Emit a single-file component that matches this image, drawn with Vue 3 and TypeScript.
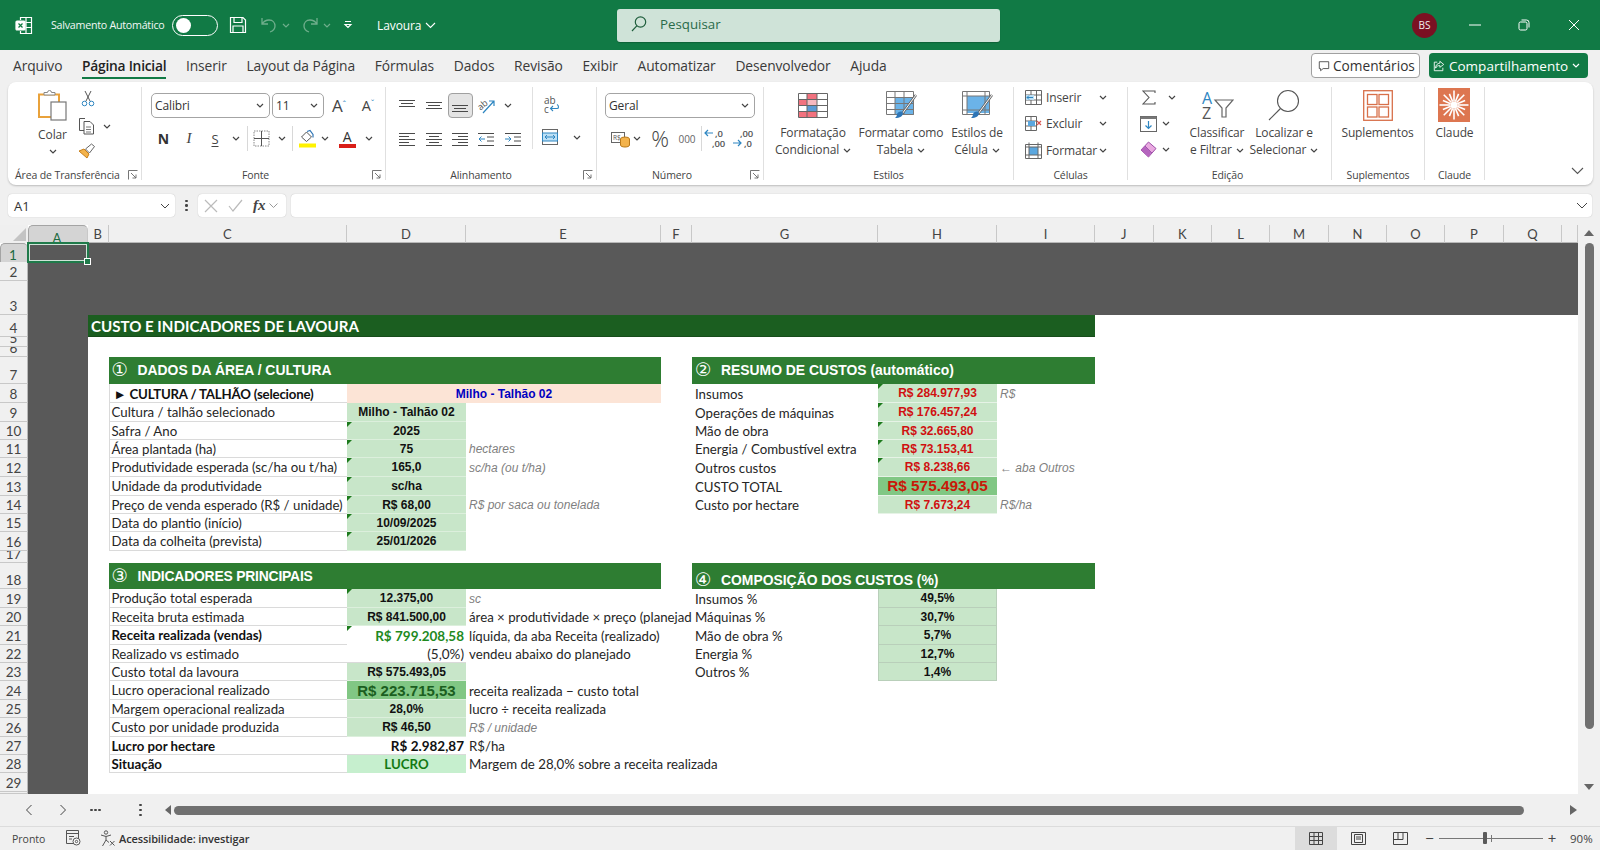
<script setup lang="ts">
type Cell = { r: number; c: number; s?: number; t: string; k: string }

const cols: [string, number][] = [
  ['A', 60], ['B', 20.5], ['C', 238.5], ['D', 119], ['E', 195], ['F', 31], ['G', 186], ['H', 119], ['I', 98],
  ['J', 58.5], ['K', 58.5], ['L', 58], ['M', 59], ['N', 58], ['O', 58], ['P', 59], ['Q', 58], ['', 16],
]
const rows = [19, 19, 34, 22, 10, 10, 27, 19, 19, 18, 18, 19, 19, 18, 18, 19, 12, 26, 19, 18, 19, 18, 18, 19, 18, 19, 18, 18, 19, 2]
const gridCols = '28px ' + cols.map((c) => c[1] + 'px').join(' ')
const gridRows = '18px ' + rows.map((h) => h + 'px').join(' ')

const C = 4, D = 5, E = 6, G = 8, H = 9, I = 10

const cells: Cell[] = [
  { r: 4, c: 3, s: 8, t: 'CUSTO E INDICADORES DE LAVOURA', k: 'title' },
  { r: 8, c: C, t: '► CULTURA / TALHÃO (selecione)', k: 'lb strong pickl' },
  { r: 8, c: D, s: 2, t: 'Milho - Talhão 02', k: 'pick' },
]

const left: [number, string, string, string, string?][] = [
  [9, 'Cultura / talhão selecionado', 'Milho - Talhão 02', ''],
  [10, 'Safra / Ano', '2025', 'tick'],
  [11, 'Área plantada (ha)', '75', 'tick', 'hectares'],
  [12, 'Produtividade esperada (sc/ha ou t/ha)', '165,0', 'tick', 'sc/ha (ou t/ha)'],
  [13, 'Unidade da produtividade', 'sc/ha', 'tick'],
  [14, 'Preço de venda esperado (R$ / unidade)', 'R$ 68,00', 'tick', 'R$ por saca ou tonelada'],
  [15, 'Data do plantio (início)', '10/09/2025', 'tick'],
  [16, 'Data da colheita (prevista)', '25/01/2026', 'tick'],
]
for (const [r, l, v, k, n] of left) {
  cells.push({ r, c: C, t: l, k: 'lb' }, { r, c: D, t: v, k: 'val ' + k })
  if (n) cells.push({ r, c: E, t: n, k: 'note' })
}

const costs: [number, string, string, string, string?][] = [
  [8, 'Insumos', 'R$ 284.977,93', 'tick', 'R$'],
  [9, 'Operações de máquinas', 'R$ 176.457,24', 'tick'],
  [10, 'Mão de obra', 'R$ 32.665,80', 'tick'],
  [11, 'Energia / Combustível extra', 'R$ 73.153,41', 'tick'],
  [12, 'Outros custos', 'R$ 8.238,66', 'tick', '← aba Outros'],
  [13, 'CUSTO TOTAL', 'R$ 575.493,05', 'total'],
  [14, 'Custo por hectare', 'R$ 7.673,24', '', 'R$/ha'],
]
for (const [r, l, v, k, n] of costs) {
  cells.push({ r, c: G, t: l, k: 'lb bare' }, { r, c: H, t: v, k: 'val red wsep ' + k })
  if (n) cells.push({ r, c: I, t: n, k: 'note' })
}

cells.push(
  { r: 19, c: C, t: 'Produção total esperada', k: 'lb' },
  { r: 19, c: D, t: '12.375,00', k: 'val tick' },
  { r: 19, c: E, t: 'sc', k: 'note' },
  { r: 20, c: C, t: 'Receita bruta estimada', k: 'lb' },
  { r: 20, c: D, t: 'R$ 841.500,00', k: 'val' },
  { r: 20, c: E, s: 2, t: 'área × produtividade × preço (planejado)', k: 'txt' },
  { r: 21, c: C, t: 'Receita realizada (vendas)', k: 'lb strong' },
  { r: 21, c: D, t: 'R$ 799.208,58', k: 'right green tick' },
  { r: 21, c: E, s: 2, t: 'líquida, da aba Receita (realizado)', k: 'txt' },
  { r: 22, c: C, t: 'Realizado vs estimado', k: 'lb' },
  { r: 22, c: D, t: '(5,0%)', k: 'right plain' },
  { r: 22, c: E, t: 'vendeu abaixo do planejado', k: 'txt' },
  { r: 23, c: C, t: 'Custo total da lavoura', k: 'lb' },
  { r: 23, c: D, t: 'R$ 575.493,05', k: 'val' },
  { r: 24, c: C, t: 'Lucro operacional realizado', k: 'lb' },
  { r: 24, c: D, t: 'R$ 223.715,53', k: 'val profit' },
  { r: 24, c: E, t: 'receita realizada − custo total', k: 'txt' },
  { r: 25, c: C, t: 'Margem operacional realizada', k: 'lb' },
  { r: 25, c: D, t: '28,0%', k: 'val' },
  { r: 25, c: E, t: 'lucro ÷ receita realizada', k: 'txt' },
  { r: 26, c: C, t: 'Custo por unidade produzida', k: 'lb' },
  { r: 26, c: D, t: 'R$ 46,50', k: 'val' },
  { r: 26, c: E, t: 'R$ / unidade', k: 'note' },
  { r: 27, c: C, t: 'Lucro por hectare', k: 'lb strong' },
  { r: 27, c: D, t: 'R$ 2.982,87', k: 'right boldc edge' },
  { r: 27, c: E, t: 'R$/ha', k: 'txt' },
  { r: 28, c: C, t: 'Situação', k: 'lb strong' },
  { r: 28, c: D, t: 'LUCRO', k: 'state' },
  { r: 28, c: E, s: 3, t: 'Margem de 28,0% sobre a receita realizada', k: 'txt' },
)

const pct: [number, string, string][] = [
  [19, 'Insumos %', '49,5%'], [20, 'Máquinas %', '30,7%'], [21, 'Mão de obra %', '5,7%'], [22, 'Energia %', '12,7%'], [23, 'Outros %', '1,4%'],
]
for (const [r, l, v] of pct) cells.push({ r, c: G, t: l, k: 'lb bare' }, { r, c: H, t: v, k: 'val gb' })

const heads = [
  { r: 7, c: C, s: 3, n: '①', t: 'DADOS DA ÁREA / CULTURA', k: 'up' },
  { r: 7, c: G, s: 3, n: '②', t: 'RESUMO DE CUSTOS (automático)', k: 'up' },
  { r: 18, c: C, s: 3, n: '③', t: 'INDICADORES PRINCIPAIS', k: 'tight' },
  { r: 18, c: G, s: 3, n: '④', t: 'COMPOSIÇÃO DOS CUSTOS (%)', k: 'low' },
]

const place = (c: { r: number; c: number; s?: number }) => ({
  gridRow: String(c.r + 1),
  gridColumn: c.s ? `${c.c} / span ${c.s}` : String(c.c),
})

const tabs = ['Arquivo', 'Página Inicial', 'Inserir', 'Layout da Página', 'Fórmulas', 'Dados', 'Revisão', 'Exibir', 'Automatizar', 'Desenvolvedor', 'Ajuda']

const spokes = Array.from({ length: 16 }, (_, i) => {
  const a = (i / 16) * Math.PI * 2
  const l = i % 2 ? 12 : 14.5
  return { x1: 16 + Math.cos(a) * 3.5, y1: 17 + Math.sin(a) * 3.5, x2: 16 + Math.cos(a) * l, y2: 17 + Math.sin(a) * l }
})
</script>

<template>
  <div class="app">
    <header class="titlebar">
      <div class="tb-left">
        <svg class="xl" width="18" height="19" viewBox="0 0 18 19" fill="none" stroke="#fff" stroke-width="1.2">
          <path d="M5.5 4V1.5h11v16h-11V15M11 1.5v16M11 6.5h5.5M11 11.5h5.5" />
          <rect x="1" y="5" width="9" height="9" rx="1" fill="#fff" />
          <path d="M3.5 7.5l4 4M7.5 7.5l-4 4" stroke="#107C41" />
        </svg>
        <span class="auto">Salvamento Automático</span>
        <span class="toggle"><i></i></span>
        <svg class="save" width="18" height="18" viewBox="0 0 18 18" fill="none" stroke="#fff" stroke-width="1.2">
          <path d="M1.5 1.5h12.5l2.5 2.5v12.5h-15zM5 1.5v5h8v-5M4 16.5v-6.500h10v6.500" />
        </svg>
        <svg class="undo" width="18" height="18" viewBox="0 0 18 18" fill="none" stroke="#6fae8c" stroke-width="1.300">
          <path d="M2 2v6h6M2 8c2-3 4-4 7-4 4 0 6 3 6 6 0 3-2 5-5 6" />
        </svg>
        <svg class="chv dim mini" viewBox="0 0 8 5"><path d="M1 1l3 3 3-3" /></svg>
        <svg class="redo" width="18" height="18" viewBox="0 0 18 18" fill="none" stroke="#6fae8c" stroke-width="1.300">
          <path d="M16 2v6h-6M16 8c-2-3-4-4-7-4-4 0-6 3-6 6 0 3 2 5 5 6" />
        </svg>
        <svg class="chv dim mini" viewBox="0 0 8 5"><path d="M1 1l3 3 3-3" /></svg>
        <svg class="cust" width="10" height="10" viewBox="0 0 10 10" fill="none" stroke="#fff" stroke-width="1.100">
          <path d="M2 1.500h6M2 4.500l3 3 3-3z" />
        </svg>
        <span class="docname">Lavoura</span>
        <svg class="dnchv" width="11" height="7" viewBox="0 0 11 7" fill="none" stroke="#fff" stroke-width="1.100"><path d="M1 1l4.500 4.500L10 1" /></svg>
      </div>
      <div class="search">
        <svg width="18" height="18" viewBox="0 0 18 18" fill="none" stroke="#1f5e3c" stroke-width="1.200">
          <circle cx="10.500" cy="7" r="5.200" /><path d="M6.800 10.800L2 16" />
        </svg>
        <span>Pesquisar</span>
      </div>
      <div class="tb-right">
        <span class="avatar">BS</span>
        <svg class="w-min" width="12" height="2" viewBox="0 0 12 2"><path d="M0 1h12" stroke="#fff" /></svg>
        <svg class="w-max" width="12" height="12" viewBox="0 0 12 12" fill="none" stroke="#fff"><rect x="1" y="3" width="8" height="8" rx="1.500" /><path d="M3.500 1h5A2.500 2.500 0 0 1 11 3.500v5" /></svg>
        <svg class="w-close" width="12" height="12" viewBox="0 0 12 12" fill="none" stroke="#fff"><path d="M1 1l10 10M11 1L1 11" /></svg>
      </div>
    </header>

    <nav class="tabs">
      <span v-for="t in tabs" :key="t" class="tab" :class="{ on: t === 'Página Inicial' }">{{ t }}</span>
      <div class="tabs-right">
        <button class="cmt">
          <svg width="12" height="12" viewBox="0 0 14 14" fill="none" stroke="#444"><path d="M1.500 2h11v8H6l-3 2.500V10H1.500z" /></svg>
          Comentários
        </button>
        <button class="shr">
          <svg width="12" height="12" viewBox="0 0 14 14" fill="none" stroke="#fff"><path d="M8 1.500l4.500 3.700L8 8.500V6.500C5.500 6.500 4 7.500 3 9.500c0-3.500 2-5.500 5-5.800zM5 2.500H1.500v10h10V9" /></svg>
          Compartilhamento
          <svg class="chv white" viewBox="0 0 8 5"><path d="M1 1l3 3 3-3" /></svg>
        </button>
      </div>
    </nav>

    <section class="ribbon">
      <!-- Área de Transferência -->
      <div class="g g-clip">
        <div class="g-body clip-body">
          <div class="paste">
            <svg width="32" height="32" viewBox="0 0 32 32" fill="none">
              <path d="M2 5.500h20V28H2z" stroke="#E9A23B" stroke-width="2" />
              <path d="M7 6V3.500h3.500a2 2 0 0 1 4 0H18V6z" fill="#fff" stroke="#888" />
              <rect x="14" y="13" width="15" height="18" fill="#fff" stroke="#777" stroke-width="1.200" />
            </svg>
            <span>Colar</span>
            <svg class="chv" viewBox="0 0 8 5"><path d="M1 1l3 3 3-3" /></svg>
          </div>
          <div class="clip-side">
            <svg width="14" height="17" viewBox="0 0 14 17" fill="none" stroke="#555">
              <path d="M4 1l5 10M10 1L5 11" />
              <circle cx="3.500" cy="13.500" r="2.300" stroke="#2E86C1" /><circle cx="10.500" cy="13.500" r="2.300" stroke="#2E86C1" />
            </svg>
            <div class="cp">
              <svg width="18" height="18" viewBox="0 0 18 18" fill="none" stroke="#555">
                <path d="M6 13.500H1.500V1.500H7" /><path d="M6 4.500h6l3.500 3.500v9H6z" /><path d="M8 10h5M8 12.500h5M8 15h5" stroke-width=".8" />
              </svg>
              <svg class="chv" viewBox="0 0 8 5"><path d="M1 1l3 3 3-3" /></svg>
            </div>
            <svg width="18" height="16" viewBox="0 0 18 16" fill="none">
              <path d="M1 8l5-2 5 5-2 4z" fill="#F3B34C" stroke="#C77F1A" /><path d="M7.500 6l6-5 3 2.500-5 6.500z" stroke="#666" />
            </svg>
          </div>
        </div>
        <div class="g-foot clip-foot"><span>Área de Transferência</span><svg class="launch" viewBox="0 0 10 10"><path d="M.5 9.500v-9h9M3 3l5 5M8 4.500V8H4.500" /></svg></div>
      </div>

      <!-- Fonte -->
      <div class="g g-font">
        <div class="g-body col-body">
          <div class="font-r1">
            <div class="sel"><span>Calibri</span><svg class="chv" viewBox="0 0 8 5"><path d="M1 1l3 3 3-3" /></svg></div>
            <div class="sel"><span>11</span><svg class="chv" viewBox="0 0 8 5"><path d="M1 1l3 3 3-3" /></svg></div>
            <span class="abig">A<sup>ˆ</sup></span>
            <span class="asmall">A<sup>ˇ</sup></span>
          </div>
          <div class="font-r2">
            <b class="fn">N</b>
            <i class="fi">I</i>
            <u class="fs">S</u>
            <svg class="chv" viewBox="0 0 8 5"><path d="M1 1l3 3 3-3" /></svg>
            <span class="vs"></span>
            <svg width="17" height="17" viewBox="0 0 17 17" fill="none" stroke="#888" stroke-dasharray="1.500 1"><rect x="1" y="1" width="15" height="15" /><path d="M8.500 1v15M1 8.500h15" stroke="#555" stroke-dasharray="none" /></svg>
            <svg class="chv" viewBox="0 0 8 5"><path d="M1 1l3 3 3-3" /></svg>
            <span class="vs"></span>
            <svg width="18" height="19" viewBox="0 0 18 19" fill="none">
              <path d="M2.500 8l5-5 5 5-5 4.500z" stroke="#555" /><path d="M8 2.500l3-1 3 4v3" stroke="#2E75B6" stroke-width="1.200" />
              <rect x="0" y="14.500" width="17" height="4" fill="#FFF200" />
            </svg>
            <svg class="chv" viewBox="0 0 8 5"><path d="M1 1l3 3 3-3" /></svg>
            <span class="colorA">A</span>
            <svg class="chv" viewBox="0 0 8 5"><path d="M1 1l3 3 3-3" /></svg>
          </div>
        </div>
        <div class="g-foot font-foot"><span>Fonte</span><svg class="launch" viewBox="0 0 10 10"><path d="M.5 9.500v-9h9M3 3l5 5M8 4.500V8H4.500" /></svg></div>
      </div>

      <!-- Alinhamento -->
      <div class="g g-align">
        <div class="g-body align-body">
          <div class="align-l">
            <div class="al-r1">
              <svg class="lines" viewBox="0 0 16 12"><path d="M0 .5h16M2 3.500h12M0 6.500h16" /></svg>
              <svg class="lines" viewBox="0 0 16 12"><path d="M0 2.500h16M2 5.500h12M0 8.500h16" /></svg>
              <span class="al-on"><svg class="lines" viewBox="0 0 16 12"><path d="M0 5.500h16M2 8.500h12M0 11.500h16" /></svg></span>
              <svg width="20" height="20" viewBox="0 0 20 20" fill="none"><text x="1" y="12" class="orient" transform="rotate(-40 6 10)">ab</text><path d="M6 17L17 5M12 5h5v5" stroke="#2E86C1" stroke-width="1.200" /></svg>
              <svg class="chv" viewBox="0 0 8 5"><path d="M1 1l3 3 3-3" /></svg>
            </div>
            <div class="al-r2">
              <svg class="lines" viewBox="0 0 16 14"><path d="M0 1.500h16M0 4.500h10M0 7.500h16M0 10.500h10M0 13.500h16" /></svg>
              <svg class="lines" viewBox="0 0 16 14"><path d="M0 1.500h16M3 4.500h10M0 7.500h16M3 10.500h10M0 13.500h16" /></svg>
              <svg class="lines" viewBox="0 0 16 14"><path d="M0 1.500h16M6 4.500h10M0 7.500h16M6 10.500h10M0 13.500h16" /></svg>
              <svg class="lines" viewBox="0 0 16 14"><path d="M0 1.500h16M9 5h7M9 9h7M0 13.500h16" /><path d="M7 7H1M3.500 4.500L1 7l2.500 2.500" stroke="#2E86C1" /></svg>
              <svg class="lines" viewBox="0 0 16 14"><path d="M0 1.500h16M9 5h7M9 9h7M0 13.500h16" /><path d="M0 7h6M3.500 4.500L6 7 3.500 9.500" stroke="#2E86C1" /></svg>
            </div>
          </div>
          <div class="align-r">
            <svg width="20" height="20" viewBox="0 0 20 20" fill="none"><text x="3" y="9" class="abc">ab</text><text x="3" y="18" class="abc">c</text><path d="M16 13.500h-6M12 11l-2.500 2.500L12 16M16 13.500c2 0 2-3 0-4" stroke="#2E86C1" stroke-width="1.100" /></svg>
            <div class="merge">
              <svg width="18" height="18" viewBox="0 0 18 18" fill="none" stroke="#666"><rect x="1.500" y="1.500" width="15" height="15" /><rect x="1.500" y="5" width="15" height="8" fill="#BDE0F5" stroke="#2E86C1" /><path d="M4 9h10M6 7L4 9l2 2M12 7l2 2-2 2" stroke="#2E86C1" /></svg>
              <svg class="chv" viewBox="0 0 8 5"><path d="M1 1l3 3 3-3" /></svg>
            </div>
          </div>
        </div>
        <div class="g-foot align-foot"><span>Alinhamento</span><svg class="launch" viewBox="0 0 10 10"><path d="M.5 9.500v-9h9M3 3l5 5M8 4.500V8H4.500" /></svg></div>
      </div>

      <!-- Número -->
      <div class="g g-num">
        <div class="g-body col-body num-body">
          <div class="sel geral"><span>Geral</span><svg class="chv" viewBox="0 0 8 5"><path d="M1 1l3 3 3-3" /></svg></div>
          <div class="num-r2">
            <svg width="20" height="18" viewBox="0 0 20 18" fill="none"><rect x=".5" y="2.500" width="13" height="10" stroke="#666" /><text x="2" y="10" class="t7">R$</text><ellipse cx="14" cy="9" rx="4.500" ry="2" fill="#F3B34C" stroke="#B9791A" /><path d="M9.500 9v6c0 2.700 9 2.700 9 0V9" fill="#F3B34C" stroke="#B9791A" /></svg>
            <svg class="chv" viewBox="0 0 8 5"><path d="M1 1l3 3 3-3" /></svg>
            <span></span>
            <span class="pc">%</span>
            <span></span>
            <span class="mil">000</span>
            <span class="vs"></span>
            <span></span>
            <svg width="23" height="21" viewBox="0 0 23 21" fill="none"><text x="11" y="9" class="t9">,0</text><text x="8" y="19" class="t9">,00</text><path d="M9 5H1M4 2L1 5l3 3" stroke="#2E86C1" stroke-width="1.200" /></svg>
            <span></span>
            <svg width="23" height="21" viewBox="0 0 23 21" fill="none"><text x="8" y="9" class="t9">,00</text><text x="12" y="19" class="t9">,0</text><path d="M1 15h8M6 12l3 3-3 3" stroke="#2E86C1" stroke-width="1.200" /></svg>
          </div>
        </div>
        <div class="g-foot num-foot"><span>Número</span><svg class="launch" viewBox="0 0 10 10"><path d="M.5 9.500v-9h9M3 3l5 5M8 4.500V8H4.500" /></svg></div>
      </div>

      <!-- Estilos -->
      <div class="g g-sty">
        <div class="g-body sty-body">
          <div class="big w90">
            <div class="ico">
              <svg width="30" height="25" viewBox="0 0 30 25" fill="none">
                <rect x="9" y="1" width="10" height="5.500" fill="#F2727F" /><rect x="1" y="6.500" width="8" height="6" fill="#F2727F" /><rect x="9" y="12.500" width="10" height="6" fill="#5B9BD5" /><rect x="1" y="18.500" width="18" height="5.500" fill="#F2727F" /><rect x="9" y="6.500" width="10" height="6" fill="#F8B9BF" />
                <path d="M.5.5h29v24H.5zM9 .5v24M19 .5v24M.5 6.500h29M.5 12.500h29M.5 18.500h29" stroke="#666" />
              </svg>
            </div>
            <span>Formatação</span>
            <span>Condicional <svg class="chv" viewBox="0 0 8 5"><path d="M1 1l3 3 3-3" /></svg></span>
          </div>
          <div class="big w86">
            <div class="ico">
              <svg width="32" height="30" viewBox="0 0 32 30" fill="none">
                <rect x="10" y="7" width="19" height="18" fill="#6BB3E8" />
                <path d="M1.500 1.500h27v23h-27zM10 1.500v23M19 1.500v23M1.500 7.500h27M1.500 13.500h27M1.500 19.500h27" stroke="#777" />
                <path d="M31 5L17 24" stroke="#666" stroke-width="2.500" /><path d="M31 5L17 24" stroke="#fff" stroke-width="1" />
                <path d="M12 24c2-3 5-3 6-1 0 3-3 5-8 5 1-1 2-2 2-4z" fill="#2E75B6" />
              </svg>
            </div>
            <span>Formatar como</span>
            <span>Tabela <svg class="chv" viewBox="0 0 8 5"><path d="M1 1l3 3 3-3" /></svg></span>
          </div>
          <div class="big w66">
            <div class="ico">
              <svg width="32" height="30" viewBox="0 0 32 30" fill="none">
                <rect x="6" y="6" width="22" height="17" fill="#6BB3E8" />
                <path d="M1.500 1.500h27v23h-27zM6 1.500v23M24 1.500v23M1.500 6h27M1.500 20h27" stroke="#777" />
                <path d="M31 5L17 24" stroke="#666" stroke-width="2.500" /><path d="M31 5L17 24" stroke="#fff" stroke-width="1" />
                <path d="M12 24c2-3 5-3 6-1 0 3-3 5-8 5 1-1 2-2 2-4z" fill="#2E75B6" />
              </svg>
            </div>
            <span>Estilos de</span>
            <span>Célula <svg class="chv" viewBox="0 0 8 5"><path d="M1 1l3 3 3-3" /></svg></span>
          </div>
        </div>
        <div class="g-foot"><span>Estilos</span></div>
      </div>

      <!-- Células -->
      <div class="g g-cel">
        <div class="g-body cel-body">
          <div class="cel-r">
            <svg width="17" height="15" viewBox="0 0 17 15" fill="none"><path d="M.5.500h16v14H.5zM.5 5h16M.5 10h16M6 .5v14M11.500.5v14" stroke="#666" /><rect x="1" y="5" width="8" height="5" fill="#BDE0F5" /><path d="M8 7.500H2M4 5.500l-2 2 2 2" stroke="#2E86C1" /></svg>
            <span>Inserir</span>
            <svg class="chv" viewBox="0 0 8 5"><path d="M1 1l3 3 3-3" /></svg>
          </div>
          <div class="cel-r">
            <svg width="17" height="15" viewBox="0 0 17 15" fill="none"><path d="M.5.500h11v14H.5zM.5 5h11M.5 10h11M6 .5v14" stroke="#666" /><rect x="3" y="5" width="7" height="5" fill="#5BA7DF" /><path d="M12 5l4 4M16 5l-4 4" stroke="#D9534F" stroke-width="1.200" /></svg>
            <span>Excluir</span>
            <svg class="chv" viewBox="0 0 8 5"><path d="M1 1l3 3 3-3" /></svg>
          </div>
          <div class="cel-r">
            <svg width="17" height="17" viewBox="0 0 17 17" fill="none"><rect x="4" y="5" width="9" height="8" fill="#5BA7DF" /><path d="M.5 2.500h16v14H.5zM.5 5h16M.5 13h16M4 .5v16M13 .5v16" stroke="#666" /></svg>
            <span>Formatar</span>
            <svg class="chv" viewBox="0 0 8 5"><path d="M1 1l3 3 3-3" /></svg>
          </div>
        </div>
        <div class="g-foot"><span>Células</span></div>
      </div>

      <!-- Edição -->
      <div class="g g-edit">
        <div class="g-body edit-body">
          <div class="edit-side">
            <div class="er1">
              <svg width="14" height="15" viewBox="0 0 14 15" fill="none" stroke="#555" stroke-width="1.100"><path d="M13 3V1H1l6 6.500L1 14h12v-2" /></svg>
              <svg class="chv" viewBox="0 0 8 5"><path d="M1 1l3 3 3-3" /></svg>
            </div>
            <div class="er2">
              <svg width="17" height="16" viewBox="0 0 17 16" fill="none"><rect x=".5" y=".5" width="16" height="15" fill="#fff" stroke="#666" /><rect x=".5" y=".5" width="16" height="2.500" fill="#777" /><path d="M8.500 5v7M5.500 9.500l3 3 3-3" stroke="#2E86C1" stroke-width="1.200" /></svg>
              <svg class="chv" viewBox="0 0 8 5"><path d="M1 1l3 3 3-3" /></svg>
            </div>
            <div class="er2">
              <svg width="17" height="17" viewBox="0 0 17 17" fill="none"><path d="M1 9l7.500-8 7.500 6.500-7.500 8.500z" fill="#E9A9E0" stroke="#9C4FA8" /><path d="M5 5l7 7" stroke="#9C4FA8" /><path d="M1 9l3.500-4 7 6.500-3 4.500z" fill="#B565BE" /></svg>
              <svg class="chv" viewBox="0 0 8 5"><path d="M1 1l3 3 3-3" /></svg>
            </div>
          </div>
          <div class="big w66b">
            <div class="ico">
              <svg width="34" height="32" viewBox="0 0 34 32" fill="none">
                <text x="2" y="15" class="az a">A</text><text x="2" y="30" class="az z">Z</text>
                <path d="M15 11h18l-7 8v9h-4v-9z" stroke="#666" stroke-width="1.200" />
              </svg>
            </div>
            <span>Classificar</span>
            <span>e Filtrar <svg class="chv" viewBox="0 0 8 5"><path d="M1 1l3 3 3-3" /></svg></span>
          </div>
          <div class="big w70">
            <div class="ico">
              <svg width="32" height="32" viewBox="0 0 32 32" fill="none" stroke="#555" stroke-width="1.100"><circle cx="20" cy="12" r="10.500" /><path d="M12.500 19.500L1 31" /></svg>
            </div>
            <span>Localizar e</span>
            <span>Selecionar <svg class="chv" viewBox="0 0 8 5"><path d="M1 1l3 3 3-3" /></svg></span>
          </div>
        </div>
        <div class="g-foot edit-foot"><span>Edição</span></div>
      </div>

      <!-- Suplementos -->
      <div class="g g-sup">
        <div class="g-body sup-body">
          <div class="big">
            <div class="ico">
              <svg width="30" height="31" viewBox="0 0 30 31" fill="none" stroke="#D8704A" stroke-width="1.300"><rect x=".7" y=".7" width="28.600" height="29.600" /><rect x="4.500" y="4.500" width="9.500" height="10" /><rect x="16" y="4.500" width="9.500" height="10" /><rect x="4.500" y="17" width="9.500" height="10" /><rect x="16" y="17" width="9.500" height="10" /></svg>
            </div>
            <span>Suplementos</span>
          </div>
        </div>
        <div class="g-foot"><span>Suplementos</span></div>
      </div>

      <!-- Claude -->
      <div class="g g-cla">
        <div class="g-body sup-body">
          <div class="big">
            <div class="ico">
              <svg width="32" height="34" viewBox="0 0 32 34">
                <rect width="32" height="34" fill="#DD7650" />
                <line v-for="(s, i) in spokes" :key="i" :x1="s.x1" :y1="s.y1" :x2="s.x2" :y2="s.y2" stroke="#fff" stroke-width="1.600" />
                <circle cx="16" cy="17" r="3.500" fill="#fff" />
              </svg>
            </div>
            <span>Claude</span>
          </div>
        </div>
        <div class="g-foot"><span>Claude</span></div>
      </div>

      <div class="rb-end">
        <svg width="13" height="8" viewBox="0 0 13 8" fill="none" stroke="#555" stroke-width="1.100"><path d="M1 1l5.500 5.500L12 1" /></svg>
      </div>
    </section>

    <div class="fbar">
      <div class="namebox"><span>A1</span><svg width="10" height="6" viewBox="0 0 10 6" fill="none" stroke="#444"><path d="M1 1l4 4 4-4" /></svg></div>
      <div class="fdots"><i></i><i></i><i></i></div>
      <div class="fxbox">
        <svg width="14" height="14" viewBox="0 0 14 14" fill="none" stroke="#bbb" stroke-width="1.200"><path d="M1 1l12 12M13 1L1 13" /></svg>
        <svg width="15" height="13" viewBox="0 0 15 13" fill="none" stroke="#bbb" stroke-width="1.200"><path d="M1 7l4 5L14 1" /></svg>
        <span class="fx">fx</span>
        <svg width="9" height="5" viewBox="0 0 9 5" fill="none" stroke="#999"><path d="M.5.500l4 4 4-4" /></svg>
      </div>
      <div class="finput">
        <svg width="12" height="7" viewBox="0 0 12 7" fill="none" stroke="#444"><path d="M1 1l5 5 5-5" /></svg>
      </div>
    </div>

    <div class="sheetwrap">
      <div class="sheet" :style="{ gridTemplateColumns: gridCols, gridTemplateRows: gridRows }">
        <div class="corner"><i></i></div>
        <div v-for="(c, i) in cols" :key="'c' + i" class="colh" :class="{ sel: c[0] === 'A' }" :style="{ gridColumn: String(i + 2), gridRow: '1' }">{{ c[0] }}</div>
        <div v-for="(h, i) in rows" :key="'r' + i" class="rowh" :class="{ sel: i === 0 }" :style="{ gridRow: String(i + 2), gridColumn: '1' }"><span>{{ i + 1 }}</span></div>

        <div class="dark band"></div>
        <div class="dark side"></div>
        <div class="a1"><i></i></div>

        <div v-for="(h, i) in heads" :key="'h' + i" class="sec" :class="h.k" :style="place(h)">
          <span class="num">{{ h.n }}</span><span>{{ h.t }}</span>
        </div>
        <div v-for="(c, i) in cells" :key="i" class="cell" :class="c.k" :style="place(c)"><span>{{ c.t }}</span></div>
      </div>
      <aside class="vscroll">
        <svg width="10" height="6" viewBox="0 0 10 6"><path d="M0 6l5-6 5 6z" fill="#666" /></svg>
        <i></i>
        <svg width="10" height="6" viewBox="0 0 10 6"><path d="M0 0l5 6 5-6z" fill="#666" /></svg>
      </aside>
    </div>

    <div class="hscroll">
      <svg width="8" height="12" viewBox="0 0 8 12" fill="none" stroke="#444" class="n1"><path d="M6.500 1L1.500 6l5 5" /></svg>
      <svg width="8" height="12" viewBox="0 0 8 12" fill="none" stroke="#444" class="n2"><path d="M1.500 1l5 5-5 5" /></svg>
      <span class="more"><i></i><i></i><i></i></span>
      <span class="vdots"><i></i><i></i><i></i></span>
      <svg width="6" height="10" viewBox="0 0 6 10" class="n3"><path d="M6 0L0 5l6 5z" fill="#666" /></svg>
      <span class="hthumb"></span>
      <svg width="7" height="10" viewBox="0 0 7 10" class="n4"><path d="M0 0l7 5-7 5z" fill="#666" /></svg>
    </div>

    <footer class="status">
      <span class="ready">Pronto</span>
      <svg class="macro" width="15" height="17" viewBox="0 0 15 17" fill="none" stroke="#555"><path d="M.5.500h12v13H.5zM.5 3.500h12M3 6.500h5M3 9h3" /><circle cx="10.500" cy="11.500" r="3.500" fill="#fff" /><circle cx="10.500" cy="11.500" r="1.200" /></svg>
      <svg class="acc" width="15" height="17" viewBox="0 0 15 17" fill="none" stroke="#555"><circle cx="6" cy="2.500" r="1.700" /><path d="M1 5l5 1.500L11 5M6 6.500V10l-3.500 6M6 10l3 2.500" /><path d="M10 11l4.500 4.500M14.500 11L10 15.500" /></svg>
      <b class="acct">Acessibilidade: investigar</b>
      <div class="st-right">
        <span class="view on"><svg width="14" height="13" viewBox="0 0 14 13" fill="none" stroke="#444"><path d="M.5.500h13v12H.5zM.5 4.500h13M.5 8.500h13M5 .5v12M9.500.5v12" /></svg></span>
        <span class="view"><svg width="15" height="13" viewBox="0 0 15 13" fill="none" stroke="#444"><path d="M.5.500h14v12H.5zM3.500 2.500h8v8h-8zM5 5h5M5 7h5" /></svg></span>
        <span class="view"><svg width="15" height="13" viewBox="0 0 15 13" fill="none" stroke="#444"><path d="M.5.500h14v12H.5zM5 .5v7h5v-7M.5 7.500H5" /></svg></span>
        <span class="zm z1">−</span>
        <span class="slider"><i></i><b></b></span>
        <span class="zm">+</span>
        <span class="pct">90%</span>
      </div>
    </footer>
  </div>
</template>

<style>
html, body { margin: 0; padding: 0; background: #f0f0f0; overflow: hidden; }
</style>

<style scoped>
.app { width: 1600px; height: 850px; overflow: hidden; display: flex; flex-direction: column; background: #f0f0f0; font-family: "Open Sans", "Noto Sans", sans-serif; color: #333; }

/* title bar */
.titlebar { height: 50px; flex: none; background: #117A45; color: #fff; display: flex; align-items: center; }
.tb-left { width: 617px; display: flex; align-items: center; flex: none; }
.xl { margin-left: 15px; }
.auto { margin-left: 18px; width: 121px; font-size: 10.700px; letter-spacing: -.25px; white-space: nowrap; color: #f2f8f5; }
.toggle { width: 46px; height: 21px; box-sizing: border-box; border: 1.300px solid #fff; border-radius: 11px; display: flex; align-items: center; padding-left: 2.500px; }
.toggle i { width: 15px; height: 15px; border-radius: 50%; background: #fff; }
.save { margin-left: 11px; }
.undo { margin-left: 13px; }
.mini { margin-left: 4px; }
.redo { margin-left: 11px; }
.cust { margin-left: 12px; }
.docname { margin-left: 24px; font-size: 12px; width: 46px; letter-spacing: -.1px; }
.dnchv { margin-left: 2px; }
.search { width: 383px; height: 33px; flex: none; box-sizing: border-box; background: #CFE3D8; border-radius: 3px; display: flex; align-items: center; padding: 0 0 2px 13px; gap: 12px; font-size: 13.300px; color: #2a6b4a; box-shadow: 0 1px 1px rgba(0,0,0,.2); }
.tb-right { flex: 1; display: flex; align-items: center; }
.avatar { width: 25px; height: 25px; margin-left: 412px; border-radius: 50%; background: #7B1022; display: flex; align-items: center; justify-content: center; font-size: 10px; color: #eee; }
.w-min { margin-left: 32px; }
.w-max { margin-left: 37px; }
.w-close { margin-left: 38px; }

/* tabs */
.tabs { height: 32px; flex: none; display: flex; align-items: flex-start; padding-left: 13px; gap: 19.700px; font-size: 13.800px; letter-spacing: -.08px; color: #3a3a3a; }
.tab { height: 28px; margin-top: 1px; line-height: 29px; box-sizing: border-box; white-space: nowrap; }
.tab.on { font-weight: 600; color: #222; border-bottom: 2px solid #117A45; letter-spacing: -.25px; }
.tabs-right { margin-left: auto; margin-top: 3px; display: flex; gap: 9px; padding-right: 12px; letter-spacing: 0; }
button { font-family: inherit; font-size: 14px; padding: 0; margin: 0; white-space: nowrap; }
.cmt { width: 109px; height: 25px; background: #fff; color: #333; border: 1px solid #a0a0a0; border-radius: 4px; display: flex; align-items: center; padding-left: 6px; gap: 3px; font-size: 13.700px; }
.shr { width: 159px; height: 25px; background: #117A45; color: #fff; border: none; border-radius: 4px; display: flex; align-items: center; padding-left: 4px; gap: 4px; font-size: 13.500px; }

/* ribbon */
.ribbon { height: 103px; margin: 0 7px 0 8px; flex: none; background: #fff; border-radius: 8px; box-shadow: 0 1px 2px rgba(0,0,0,.22); display: flex; font-size: 12px; color: #444; letter-spacing: -.12px; }
.g { height: 93px; margin-top: 5px; box-sizing: border-box; border-right: 1px solid #e0e0e0; display: flex; flex-direction: column; flex: none; }
.g-body { height: 79px; flex: none; }
.g-foot { height: 17px; flex: none; display: flex; align-items: center; justify-content: center; position: relative; font-size: 10.500px; color: #444; white-space: nowrap; }
.launch { width: 10px; height: 10px; fill: none; stroke: #666; stroke-width: .9; position: absolute; right: 3px; top: 4px; }
svg.chv { width: 8px; height: 5px; fill: none; stroke: #444; stroke-width: 1.200; flex: none; }
svg.chv.dim { stroke: #6fae8c; }
svg.chv.white { stroke: #fff; }
.big { display: flex; flex-direction: column; align-items: center; line-height: 16.500px; white-space: nowrap; flex: none; }
.big .ico { height: 38px; display: flex; align-items: center; justify-content: center; padding-bottom: 1.500px; box-sizing: border-box; }
.big .chv { vertical-align: middle; margin-left: 1px; }

.g-clip { width: 134px; }
.clip-body { display: flex; }
.paste { margin-left: 28px; width: 33px; display: flex; flex-direction: column; align-items: center; padding-top: 2px; }
.paste span { margin-top: 5px; line-height: 17px; font-size: 12px; }
.paste .chv { margin-top: 6px; }
.clip-side { margin-left: 9px; display: flex; flex-direction: column; align-items: flex-start; gap: 8px; padding-top: 3px; }
.clip-side > svg:first-child { margin-left: 3px; }
.cp { display: flex; align-items: center; gap: 7px; margin-top: 2px; }
.clip-foot { justify-content: flex-start; padding-left: 7px; }

.g-font { width: 244px; }
.col-body { padding: 6px 0 0 9px; box-sizing: border-box; display: flex; flex-direction: column; }
.font-r1 { display: grid; grid-template-columns: 119px 54px 30px 28px; align-items: center; justify-items: center; }
.font-r1 .sel:first-child { width: 119px; }
.font-r1 .sel:nth-child(2) { width: 52px; justify-self: end; }
.sel { height: 25px; box-sizing: border-box; border: 1px solid #a4a4a4; border-radius: 5px; display: flex; align-items: center; justify-content: space-between; padding: 0 5px 0 3px; font-size: 12px; color: #333; }
.abig { font-size: 17px; color: #444; }
.asmall { font-size: 14.500px; color: #444; }
sup { font-size: 9px; color: #2e86c1; line-height: 0; vertical-align: 4px; }
.font-r2 { margin-top: 8px; height: 25px; display: grid; grid-template-columns: 25px 26px 26px 15px 8px 21px 19px 2px 29px 6px 7px 24px 20px; align-items: center; justify-items: center; }
.font-r2 .colorA { grid-column: 12; }
.font-r2 .colorA + .chv { grid-column: 13; }
.fn { font-family: "Open Sans", sans-serif; font-size: 14px; font-weight: 700; color: #333; }
.fi { font-family: "Liberation Serif", serif; font-size: 15px; color: #444; }
.fs { font-size: 13px; color: #444; text-underline-offset: 2px; }
.vs { width: 1px; height: 25px; background: #d8d8d8; display: block; }
.colorA { font-size: 14px; line-height: 15px; border-bottom: 4px solid #D91E18; width: 17px; text-align: center; color: #333; }
.font-foot { padding-right: 16px; }

.g-align { width: 211px; }
.align-body { display: flex; }
.align-l { width: 147px; box-sizing: border-box; padding: 6px 0 0 7px; height: 62px; border-right: 1px solid #e0e0e0; }
.al-r1 { display: grid; grid-template-columns: 27px 27px 26px 28px 14px; height: 25px; align-items: center; justify-items: center; }
.al-r2 { display: grid; grid-template-columns: 27px 27px 25px 28px 26px; height: 25px; margin-top: 8px; align-items: center; justify-items: center; }
svg.lines { width: 16px; height: 14px; fill: none; stroke: #4a4a4a; stroke-width: 1; }
.al-on { width: 25px; height: 25px; box-sizing: border-box; border: 1px solid #a0a0a0; border-radius: 4px; background: #e4e4e4; display: flex; align-items: center; justify-content: center; }
.orient { font: 9px "Open Sans", sans-serif; fill: #555; }
.abc { font: 10px "Open Sans", sans-serif; fill: #555; }
.align-r { padding: 8px 0 0 8px; display: flex; flex-direction: column; gap: 13px; }
.merge { display: flex; align-items: center; gap: 14px; }
.align-foot { padding-right: 20px; }

.g-num { width: 167px; }
.num-body { padding-left: 8px; }
.geral { width: 150px; }
.num-r2 { margin-top: 8px; margin-left: 4px; height: 25px; display: grid; grid-template-columns: 24px 8px 7px 24px 2px 26px 2px 1px 24px 4px 24px; align-items: center; justify-items: center; }
.t7 { font: 6.500px "Open Sans", sans-serif; fill: #555; }
.t9 { font: 600 9.500px "Open Sans", sans-serif; fill: #555; }
.pc { font-size: 22px; font-weight: 300; color: #444; line-height: 25px; }
.mil { font-size: 10px; color: #666; }
.num-foot { padding-right: 16px; }

.g-sty { width: 250px; }
.sty-body { display: flex; padding-left: 4px; }
.w90 { width: 90px; }
.w86 { width: 86px; }
.w66 { width: 66px; }
.big.w66b { width: 64px; }
.w70 { width: 70px; }

.g-cel { width: 114px; }
.cel-body { margin-top: -3px; height: 82px; }
.cel-r { height: 26.500px; display: grid; grid-template-columns: 18px 3px 50px 14px; margin-left: 11px; align-items: center; justify-items: start; }
.cel-r span { grid-column: 3; }
.cel-r .chv { justify-self: center; }

.g-edit { width: 204px; }
.edit-body { display: flex; }
.edit-side { width: 57px; display: flex; flex-direction: column; padding-left: 12px; box-sizing: border-box; margin-top: 2px; gap: 9px; }
.er1, .er2 { display: flex; align-items: center; height: 17px; }
.er1 { gap: 12px; margin-left: 2px; }
.er2 { gap: 5px; }
.az { font: 400 16px "Open Sans", sans-serif; }
.az.a { fill: #2E86C1; }
.az.z { fill: #555; }
.edit-foot { padding-right: 4px; }

.g-sup { width: 93px; }
.g-cla { width: 60px; }
.sup-body { display: flex; justify-content: center; }
.g-sup .big { margin-right: 1px; }
.rb-end { flex: 1; display: flex; align-items: flex-end; justify-content: flex-end; padding: 0 9px 10px 0; }

/* formula bar */
.fbar { height: 23px; flex: none; margin: 9px 8px 8px 8px; display: flex; align-items: stretch; }
.namebox { width: 167px; box-sizing: border-box; background: #fff; border-radius: 4px; display: flex; align-items: center; justify-content: space-between; padding: 0 5px 0 6px; font-size: 13px; color: #333; box-shadow: 0 0 1px rgba(0,0,0,.3); }
.fdots { width: 23px; display: flex; flex-direction: column; align-items: center; justify-content: center; gap: 2px; }
.fdots i { width: 2.500px; height: 2.500px; background: #444; border-radius: 50%; }
.fxbox { width: 88px; box-sizing: border-box; background: #fff; border-radius: 4px; display: flex; align-items: center; gap: 10px; padding-left: 6px; box-shadow: 0 0 1px rgba(0,0,0,.3); }
.fx { font: italic 700 15px "Liberation Serif", serif; color: #444; margin-right: -7px; }
.finput { flex: 1; margin-left: 5px; background: #fff; border-radius: 4px; display: flex; align-items: center; justify-content: flex-end; padding-right: 4px; box-shadow: 0 0 1px rgba(0,0,0,.3); }

/* sheet */
.sheetwrap { height: 569px; flex: none; display: flex; }
.sheet { width: 1578px; height: 569px; display: grid; overflow: hidden; background: #fff; flex: none; font-family: "Lato", sans-serif; }
.corner { grid-row: 1; grid-column: 1; background: #efefef; display: flex; align-items: flex-end; justify-content: flex-end; padding: 0 2px 2px 0; }
.corner i { width: 13px; height: 13px; background: #c4c4c4; clip-path: polygon(100% 0, 100% 100%, 0 100%); }
.colh { background: #f0f0f0; border-right: 1px solid #c8c8c8; border-bottom: 1px solid #b8b8b8; font-size: 13px; color: #444; display: flex; align-items: center; justify-content: center; overflow: hidden; box-sizing: border-box; }
.colh.sel { background: #d4d4d4; color: #1d6b42; }
.rowh { background: #f0f0f0; border-bottom: 1px solid #c8c8c8; border-right: 1px solid #b8b8b8; font-size: 13.500px; color: #444; display: flex; align-items: flex-end; justify-content: center; overflow: hidden; box-sizing: border-box; }
.rowh span { line-height: 15.500px; flex: none; }
.rowh.sel { background: #d4d4d4; color: #1d6b42; padding-bottom: 4px; }
.dark { background: #595959; }
.band { grid-row: 2 / 5; grid-column: 2 / -1; }
.side { grid-row: 5 / -1; grid-column: 2; }
.a1 { grid-row: 2; grid-column: 2; border: 2px solid #1f7a4a; box-shadow: inset 0 0 0 1px #cfe3d8; position: relative; margin: -1px; z-index: 2; }
.a1 i { position: absolute; right: -4px; bottom: -4px; width: 5px; height: 5px; background: #1f7a4a; border: 1px solid #fff; }

.sec { background: #2E7D32; color: #fff; font: 700 13.900px "Liberation Sans", sans-serif; display: flex; align-items: center; padding-left: 3px; white-space: nowrap; overflow: hidden; box-sizing: border-box; }
.sec .num { font-family: "DejaVu Sans", sans-serif; font-weight: 400; font-size: 18.500px; line-height: 20px; width: 26px; flex: none; }
.sec.up { padding-bottom: 1px; }
.sec.tight { letter-spacing: -.2px; }
.sec.low { align-items: flex-end; line-height: 17px; }
.sec.low .num { line-height: 18px; }

.cell { position: relative; display: flex; align-items: center; white-space: nowrap; overflow: hidden; box-sizing: border-box; font-size: 13.250px; color: #262626; }
.title { background: #1B5E20; color: #fff; font-size: 15.100px; font-weight: 700; padding-left: 3px; border-bottom: 1px solid #174d1b; }
.lb { padding-left: 2px; border: 1px solid #dadada; border-width: 0 0 1px 1px; }
.lb.bare { border: none; padding-left: 3px; }
.lb.strong { font-weight: 700; color: #111; }
.lb.pickl { padding-left: 4px; padding-top: 1px; letter-spacing: -.2px; }
.pick { background: #FCE4D6; color: #0000C0; font: 700 12px "Liberation Sans", sans-serif; justify-content: center; }
.val { background: #C8E6C9; color: #111; font: 700 12px "Liberation Sans", sans-serif; justify-content: center; border-bottom: 1px solid #dcefdc; }
.val.wsep { border-bottom: 1px solid #e6f3e6; }
.val.red { color: #D01010; }
.val.gb { border: 1px solid #b9cfba; border-top: 0; }
.val.total { background: #81C784; font-size: 15.300px; color: #C81808; }
.val.profit { background: #81C784; font-size: 15px; font-weight: 700; color: #1B5E20; }
.tick::before { content: ""; position: absolute; left: 0; top: 0; width: 5px; height: 5px; background: #1d7a1d; clip-path: polygon(0 0, 100% 0, 0 100%); }
.note { padding-left: 3px; font: italic 12px "Liberation Sans", sans-serif; color: #7f7f7f; }
.txt { padding-left: 3px; }
.right { justify-content: flex-end; padding-right: 2px; font-size: 13.500px; }
.right.green { color: #1F8A1F; font-weight: 700; }
.right.boldc { font-weight: 700; color: #111; }
.edge { border-bottom: 1px solid #dadada; }
.plain { border-bottom: 1px solid #dadada; }
.state { background: #C6EFCE; color: #137a13; font-weight: 700; justify-content: center; }

.vscroll { flex: 1; display: flex; flex-direction: column; align-items: center; padding: 5px 0 4px; box-sizing: border-box; }
.vscroll svg { flex: none; }
.vscroll i { width: 9px; flex: 1; background: #707070; border-radius: 5px; margin: 7px 0 55px; }

/* horizontal scroll */
.hscroll { height: 33px; flex: none; display: flex; align-items: center; box-sizing: border-box; border-bottom: 1px solid #dcdcdc; }
.n1 { margin-left: 25px; }
.n2 { margin-left: 26px; }
.more { margin-left: 23px; width: 12px; display: flex; gap: 1.500px; }
.more i, .vdots i { width: 2.500px; height: 2.500px; background: #444; border-radius: 50%; }
.vdots { margin-left: 37px; display: flex; flex-direction: column; gap: 2.500px; }
.n3 { margin-left: 23px; }
.hthumb { margin-left: 3px; width: 1350px; height: 9px; background: #707070; border-radius: 5px; }
.n4 { margin-left: 46px; }

/* status */
.status { flex: 1; display: flex; align-items: center; font-size: 10.500px; color: #444; }
.ready { margin-left: 12px; width: 54px; }
.macro { margin-left: 0; }
.acc { margin-left: 19px; }
.acct { margin-left: 4px; font-size: 11px; font-weight: 600; letter-spacing: -.12px; color: #333; }
.st-right { margin-left: auto; display: flex; align-items: stretch; height: 100%; padding-right: 10px; }
.view { width: 42px; display: flex; align-items: center; justify-content: center; }
.view.on { background: #dcdcdc; }
.zm { width: 16px; text-align: center; align-self: center; font-size: 15px; line-height: 15px; color: #444; }
.zm.z1 { width: 17px; }
.slider { width: 104px; margin: 0 1px; position: relative; align-self: center; height: 1px; background: #777; display: block; }
.slider i { position: absolute; left: 44px; top: -6px; width: 4px; height: 12px; background: #5a5a5a; border-radius: 1px; }
.slider b { position: absolute; left: 52px; top: -3px; width: 1px; height: 7px; background: #777; }
.pct { width: 20px; margin-left: 10px; text-align: center; align-self: center; font-size: 11.500px; color: #444; white-space: nowrap; }
</style>
